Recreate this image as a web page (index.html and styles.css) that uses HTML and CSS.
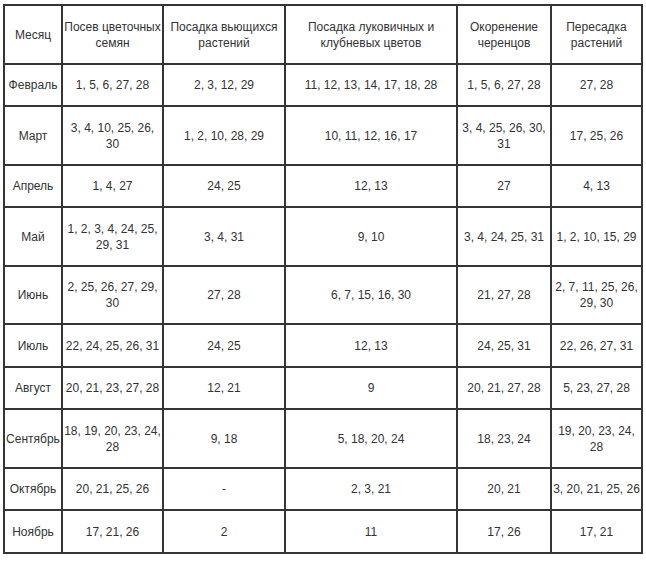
FILE: index.html
```html
<!DOCTYPE html>
<html lang="ru">
<head>
<meta charset="utf-8">
<title>Календарь</title>
<link rel="stylesheet" href="styles.css">
</head>
<body>
<table class="cal">
<colgroup>
<col class="c1"><col class="c2"><col class="c3"><col class="c4"><col class="c5"><col class="c6">
</colgroup>
<thead>
<tr><th>Месяц</th><th>Посев цветочных семян</th><th>Посадка вьющихся растений</th><th>Посадка луковичных и клубневых цветов</th><th>Окоренение черенцов</th><th>Пересадка растений</th></tr>
</thead>
<tbody>
<tr><td>Февраль</td><td>1, 5, 6, 27, 28</td><td>2, 3, 12, 29</td><td>11, 12, 13, 14, 17, 18, 28</td><td>1, 5, 6, 27, 28</td><td>27, 28</td></tr>
<tr><td>Март</td><td>3, 4, 10, 25, 26, 30</td><td>1, 2, 10, 28, 29</td><td>10, 11, 12, 16, 17</td><td>3, 4, 25, 26, 30, 31</td><td>17, 25, 26</td></tr>
<tr><td>Апрель</td><td>1, 4, 27</td><td>24, 25</td><td>12, 13</td><td>27</td><td>4, 13</td></tr>
<tr><td>Май</td><td>1, 2, 3, 4, 24, 25, 29, 31</td><td>3, 4, 31</td><td>9, 10</td><td>3, 4, 24, 25, 31</td><td>1, 2, 10, 15, 29</td></tr>
<tr><td>Июнь</td><td>2, 25, 26, 27, 29, 30</td><td>27, 28</td><td>6, 7, 15, 16, 30</td><td>21, 27, 28</td><td>2, 7, 11, 25, 26, 29, 30</td></tr>
<tr><td>Июль</td><td>22, 24, 25, 26, 31</td><td>24, 25</td><td>12, 13</td><td>24, 25, 31</td><td>22, 26, 27, 31</td></tr>
<tr><td>Август</td><td>20, 21, 23, 27, 28</td><td>12, 21</td><td>9</td><td>20, 21, 27, 28</td><td>5, 23, 27, 28</td></tr>
<tr><td>Сентябрь</td><td>18, 19, 20, 23, 24, 28</td><td>9, 18</td><td>5, 18, 20, 24</td><td>18, 23, 24</td><td>19, 20, 23, 24, 28</td></tr>
<tr><td>Октябрь</td><td>20, 21, 25, 26</td><td>-</td><td>2, 3, 21</td><td>20, 21</td><td>3, 20, 21, 25, 26</td></tr>
<tr><td>Ноябрь</td><td>17, 21, 26</td><td>2</td><td>11</td><td>17, 26</td><td>17, 21</td></tr>
</tbody>
</table>
</body>
</html>
```
FILE: styles.css
```css
html, body {
  margin: 0;
  padding: 0;
  background: #ffffff;
}
body {
  padding: 4px 0 0 3px;
}
.cal {
  border-collapse: collapse;
  table-layout: fixed;
  width: 638px;
  font-family: "Liberation Sans", Arial, sans-serif;
  font-size: 12px;
  line-height: 16px;
  color: #333333;
}
.c1 { width: 58px; }
.c2 { width: 101px; }
.c3 { width: 122px; }
.c4 { width: 172px; }
.c5 { width: 94px; }
.c6 { width: 91px; }
.cal th,
.cal td {
  border: 2px solid #353535;
  padding: 12.5px 1px 12px;
  text-align: center;
  vertical-align: middle;
  font-weight: normal;
}
```
